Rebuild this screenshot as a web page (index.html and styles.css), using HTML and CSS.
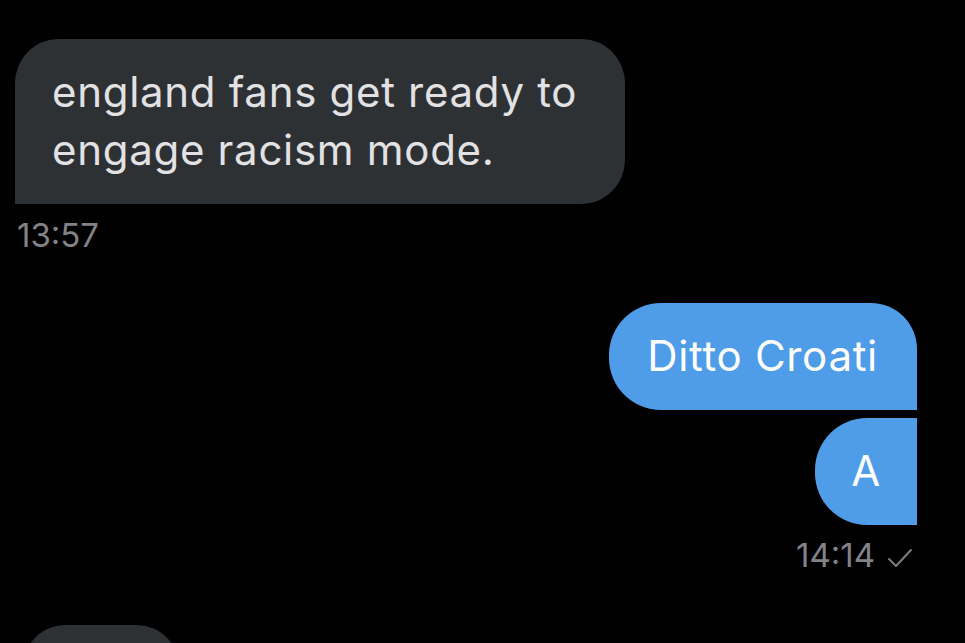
FILE: index.html
```html
<!DOCTYPE html>
<html>
<head>
<meta charset="utf-8">
<link rel="stylesheet" href="styles.css">
</head>
<body>
<div class="chat">
  <div class="row row-in">
    <div class="bubble bubble-in">england fans get ready to<br>engage racism mode.</div>
  </div>
  <div class="time time-in">13:57</div>

  <div class="row row-out first-out">
    <div class="bubble bubble-out out-first">Ditto Croati</div>
  </div>
  <div class="row row-out second-out">
    <div class="bubble bubble-out out-last">A</div>
  </div>
  <div class="time time-out">14:14
    <svg class="check" width="26" height="20" viewBox="0 0 26 20"><polyline points="2,11 9,18 24,2" fill="none" stroke="#7d7d82" stroke-width="2" stroke-linecap="round" stroke-linejoin="round"/></svg>
  </div>

  <div class="row row-in next-in">
    <div class="bubble bubble-in bubble-partial">&nbsp;</div>
  </div>
</div>
</body>
</html>
```

FILE: styles.css
```css
html, body {
  margin: 0;
  padding: 0;
  background: #000;
}

.chat {
  display: flex;
  flex-direction: column;
  height: 643px;
  overflow: hidden;
  padding-top: 39px;
  box-sizing: border-box;
  font-family: Inter, "Noto Sans", sans-serif;
}

.row {
  display: flex;
  flex-shrink: 0;
}

.row-in {
  justify-content: flex-start;
}

.row-out {
  justify-content: flex-end;
  padding-right: 48px;
}

.bubble {
  font-size: 42px;
  letter-spacing: 0.7px;
  line-height: 58px;
  padding: 24px 0 25px 0;
  white-space: nowrap;
}

.bubble-in {
  margin-left: 15px;
  background: #2e3134;
  color: #e2e2e4;
  padding-left: 37px;
  padding-right: 48px;
  border-radius: 44px 44px 44px 0;
}

.bubble-out {
  background: #4f9de8;
  color: #fff;
  padding-left: 38px;
  padding-right: 39px;
}

.out-first {
  border-radius: 52px 46px 0 52px;
}

.out-last {
  border-radius: 52px 0 0 52px;
  padding-left: 36px;
  padding-right: 36px;
}

.second-out {
  margin-top: 8px;
}

.time {
  font-size: 33px;
  line-height: 36px;
  color: #828287;
  margin-top: 13px;
  flex-shrink: 0;
}

.time-in {
  margin-left: 17px;
}

.time-out {
  align-self: flex-end;
  margin-right: 52px;
  display: flex;
  align-items: center;
  gap: 12px;
  margin-top: 12px;
}

.check {
  display: block;
  margin-top: 6px;
}

.first-out {
  margin-top: 50px;
}

.next-in {
  margin-top: 52px;
}

.bubble-partial {
  margin-left: 22px;
  width: 120px;
  padding-left: 0;
  padding-right: 38px;
  border-radius: 44px;
}
```
